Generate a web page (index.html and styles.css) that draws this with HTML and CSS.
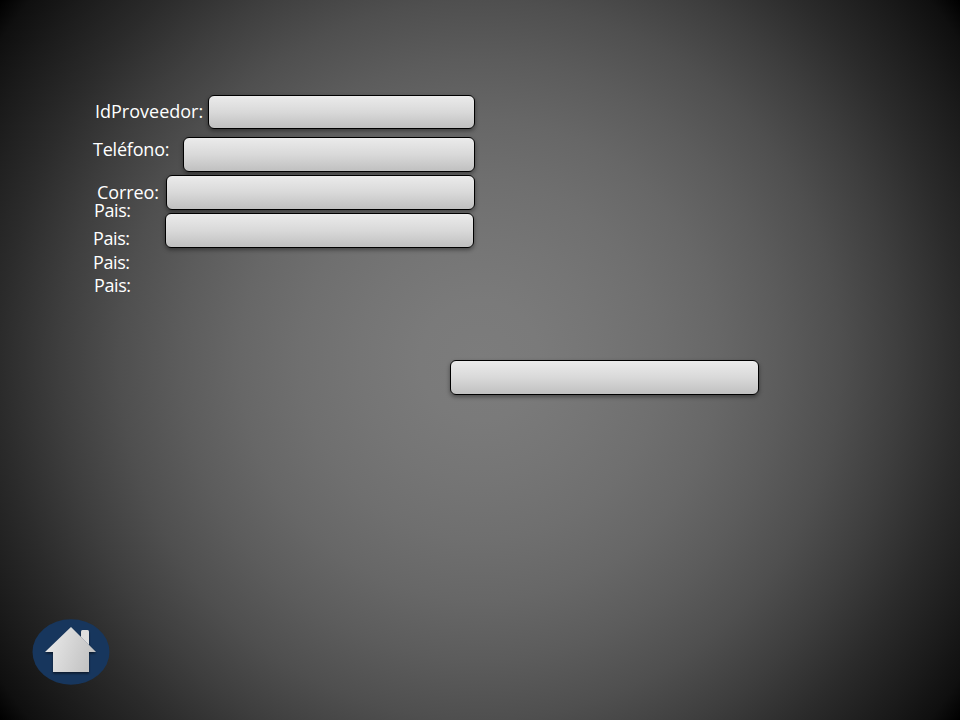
FILE: index.html
```
<!DOCTYPE html>
<html lang="es">
<head>
<meta charset="utf-8">
<title>Proveedor</title>
<link rel="stylesheet" href="styles.css">
</head>
<body>
<main class="screen">
  <form class="form">
    <div class="row row-id"><span class="label">IdProveedor:</span><span class="field"></span></div>
    <div class="row row-phone"><span class="label">Teléfono:</span><span class="field"></span></div>
    <div class="row row-mail"><span class="label">Correo:</span><span class="field"></span></div>
    <div class="row row-country">
      <div class="countries">
        <span class="label label-a">Pais:</span>
        <span class="label label-b">Pais:</span>
        <span class="label label-c">Pais:</span>
        <span class="label label-d">Pais:</span>
      </div>
      <span class="field"></span>
    </div>
  </form>
  <div class="field field-extra"></div>
  <a class="home">
    <svg width="78" height="66" viewBox="0 0 78 66">
      <defs>
        <linearGradient id="house" x1="0" y1="0" x2="1" y2="0.3">
          <stop offset="0" stop-color="#ededed"/>
          <stop offset="1" stop-color="#c4c4c4"/>
        </linearGradient>
        <filter id="shade" x="-20%" y="-20%" width="140%" height="150%">
          <feDropShadow dx="0" dy="1.5" stdDeviation="1.3" flood-color="#000" flood-opacity=".55"/>
        </filter>
      </defs>
      <ellipse cx="39" cy="33" rx="38.5" ry="32.7" fill="#17365d"/>
      <g filter="url(#shade)">
        <path fill="url(#house)" d="M39 8L64 33H57V53H21V33H13Z"/>
        <path fill="#dedede" d="M49 12.5Q49 11 50.5 11H55.5Q57 11 57 12.5V26L49 18Z"/>
      </g>
    </svg>
  </a>
</main>
</body>
</html>
```
FILE: styles.css
```
body {
  margin: 0;
}

.screen {
  box-sizing: border-box;
  display: flex;
  flex-direction: column;
  width: 960px;
  height: 720px;
  padding: 95px 0 35px;
  overflow: hidden;
  background: radial-gradient(circle 600px at 50% 50%, #7c7c7c 0%, #7a7a7a 10%, #757575 20%, #6f6f6f 30%, #676767 40%, #5c5c5c 50%, #4f4f4f 60%, #3e3e3e 70%, #2b2b2b 80%, #1a1a1a 90%, #0f0f0f 96%, #000 100%);
  color: #fff;
  font-family: "Open Sans", "Noto Sans", sans-serif;
  font-size: 18px;
  line-height: 24px;
}

.form {
  width: 475px;
}

.row {
  display: flex;
  justify-content: space-between;
  align-items: flex-start;
  height: 35px;
  margin-bottom: 3px;
}

.label {
  display: block;
  letter-spacing: -0.2px;
  white-space: nowrap;
}

.field {
  box-sizing: border-box;
  flex: none;
  width: 309px;
  height: 35px;
  border: 1px solid #000;
  border-radius: 6px;
  background: linear-gradient(#ebebeb, #d9d9d9 50%, #c0c0c0);
  box-shadow: 0 2px 4px rgba(0, 0, 0, 0.4);
}

.row-id {
  height: 34px;
  margin-bottom: 8px;
  padding-left: 95px;
}

.row-id .label {
  margin-top: 4px;
  letter-spacing: 0;
}

.row-id .field {
  width: 267px;
  height: 34px;
}

.row-phone {
  padding-left: 93px;
}

.row-phone .field {
  width: 292px;
}

.row-mail {
  padding-left: 97px;
}

.row-mail .label {
  margin-top: 5px;
  letter-spacing: -0.1px;
}

.row-country {
  margin-bottom: 0;
  padding: 0 1px 0 93px;
}

.countries {
  margin-top: -15px;
}

.countries .label {
  letter-spacing: -0.4px;
}

.label-a,
.label-d {
  margin-left: 1px;
}

.label-b {
  margin-top: 4px;
}

.label-d {
  margin-top: -1px;
}

.field-extra {
  margin: 112px 0 0 450px;
}

.home {
  width: 78px;
  height: 66px;
  margin: auto 0 0 32px;
}

.home svg {
  display: block;
}
```
